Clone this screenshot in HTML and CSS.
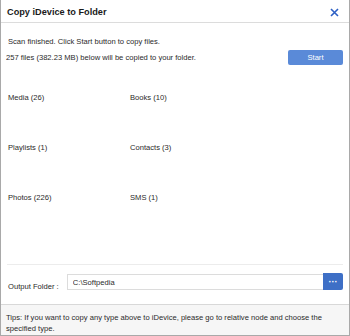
FILE: index.html
```html
<!DOCTYPE html>
<html lang="en">
  <head>
    <meta charset="UTF-8" />
    <meta name="viewport" content="width=device-width, initial-scale=1.0" />
    <title>Copy iDevice to Folder</title>
    <link rel="stylesheet" href="styles.css">
  </head>
  <body>
    <div class="window">
      <div class="titlebar">
        <span class="title">Copy iDevice to Folder</span>
        <svg class="close" width="9" height="9" viewBox="0 0 9 9">
          <path d="M1 1 L8 8 M8 1 L1 8" stroke="#2c5fc4" stroke-width="1.6" />
        </svg>
      </div>
      <div class="content">
        <p class="status">Scan finished. Click Start button to copy files.</p>
        <div class="summary">
          <span>257 files (382.23 MB) below will be copied to your folder.</span>
          <button class="btn start">Start</button>
        </div>
        <div class="types">
          <span>Media (26)</span>
          <span>Books (10)</span>
          <span>Playlists (1)</span>
          <span>Contacts (3)</span>
          <span>Photos (226)</span>
          <span>SMS (1)</span>
        </div>
      </div>
      <div class="output">
        <label for="folder">Output Folder :</label>
        <input id="folder" type="text" value="C:\Softpedia" />
        <button class="btn browse">&middot;&middot;&middot;</button>
      </div>
      <div class="footer">
        Tips: If you want to copy any type above to iDevice, please go to relative node and choose the specified type.
      </div>
    </div>
  </body>
</html>
```

FILE: styles.css
```css
html, body {
  margin: 0;
  padding: 0;
}
body {
  width: 350px;
  height: 336px;
  background: white;
  font-family: "Liberation Sans", Arial, sans-serif;
  font-size: 7.6px;
  color: #2a2a2a;
}
.window {
  box-sizing: border-box;
  width: 350px;
  height: 336px;
  border: 1px solid #a9a9a9;
  border-top: none;
  display: flex;
  flex-direction: column;
}
.titlebar {
  height: 22px;
  border-bottom: 1px solid #dcdcdc;
  display: flex;
  align-items: center;
  justify-content: space-between;
  padding: 0 10px 0 6px;
}
.title {
  font-size: 9.2px;
  font-weight: bold;
  color: #1a1a1a;
  margin-top: 2px;
}
.close {
  margin-top: 2px;
}
.content {
  flex: 1;
  padding: 0 6px 0 5px;
}
.status {
  margin: 14px 0 0 2px;
  line-height: 10px;
}
.summary {
  display: flex;
  justify-content: space-between;
  align-items: center;
  margin-top: 3px;
}
.btn {
  border: none;
  border-radius: 2px;
  background: #5a8ad8;
  color: white;
  font-family: inherit;
  font-size: 7.6px;
  padding: 0;
}
.start {
  width: 55px;
  height: 15px;
}
.types {
  display: grid;
  grid-template-columns: 122px 1fr;
  grid-auto-rows: 50px;
  margin: 28px 0 0 2px;
  line-height: 10px;
}
.output {
  margin: 0 6px 0 6px;
  border-top: 1px solid #ececec;
  display: flex;
  align-items: flex-end;
  padding: 8px 0 14px 0;
}
.output label {
  width: 59px;
  padding: 0 0 0 1px;
  line-height: 10px;
  margin-bottom: -2px;
}
.output input {
  box-sizing: border-box;
  width: 257px;
  height: 16px;
  border: 1px solid #dcdcdc;
  border-right: none;
  font-family: inherit;
  font-size: 7.6px;
  color: #2a2a2a;
  padding: 0 5px;
  margin: 0;
  outline: none;
}
.browse {
  width: 20px;
  height: 17px;
  border-radius: 0 2px 2px 0;
  background: #3e6fc6;
  font-weight: bold;
  font-size: 9px;
  letter-spacing: 0;
}
.footer {
  height: 31px;
  box-sizing: border-box;
  border-top: 1px solid #d8d8d8;
  background: #f6f6f6;
  padding: 8px 8px 0 5px;
  line-height: 10.5px;
}
```
